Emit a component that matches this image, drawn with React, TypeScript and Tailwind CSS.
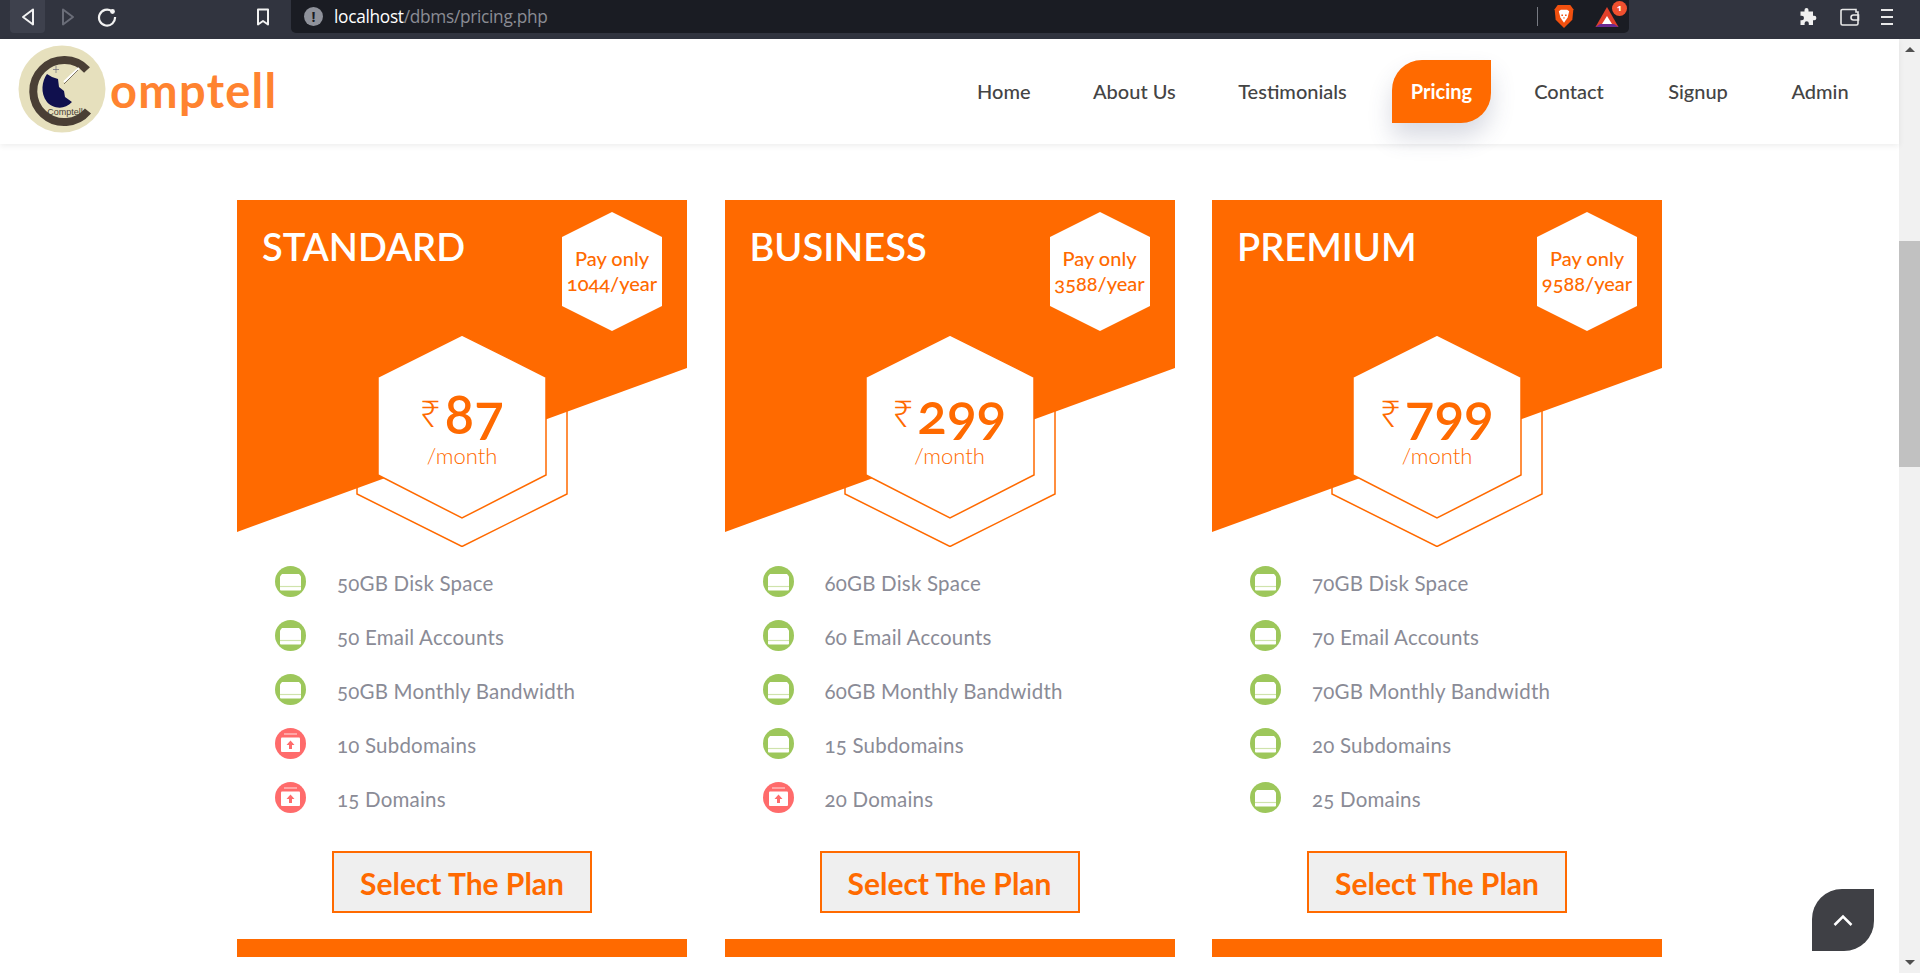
const nav = [
  { label: "Home", cls: "w-[53px] mr-[63px]" },
  { label: "About Us", cls: "w-[81px] mr-[63px]" },
  { label: "Testimonials", cls: "w-[111px] mr-[44px]" },
  { label: "Pricing", cls: "w-[99px] h-[63px] mr-[43px] flex items-center justify-center bg-[#ff6a00] text-white font-bold rounded-tl-[30px] rounded-br-[30px] shadow-[0_14px_24px_rgba(60,70,110,0.2)]" },
  { label: "Contact", cls: "w-[70px] mr-[63px]" },
  { label: "Signup", cls: "w-[62px] mr-[62px]" },
  { label: "Admin", cls: "w-[58px]" },
];

const plans = [
  {
    name: "STANDARD", year: "1044/year", price: "87",
    features: [["50GB Disk Space", 1], ["50 Email Accounts", 1], ["50GB Monthly Bandwidth", 1], ["10 Subdomains", 0], ["15 Domains", 0]],
  },
  {
    name: "BUSINESS", year: "3588/year", price: "299",
    features: [["60GB Disk Space", 1], ["60 Email Accounts", 1], ["60GB Monthly Bandwidth", 1], ["15 Subdomains", 1], ["20 Domains", 0]],
  },
  {
    name: "PREMIUM", year: "9588/year", price: "799",
    features: [["70GB Disk Space", 1], ["70 Email Accounts", 1], ["70GB Monthly Bandwidth", 1], ["20 Subdomains", 1], ["25 Domains", 1]],
  },
] as { name: string; year: string; price: string; features: [string, number][] }[];

function BrowserBar() {
  return (
    <div className="h-[39px] shrink-0 bg-[#31343f] flex items-start font-['Open_Sans',sans-serif]">
      <div className="w-[35px] h-[33px] ml-[10px] rounded-b-[4px] bg-[#3e414d] flex items-center justify-center">
        <svg width="16" height="20" viewBox="0 0 16 20" fill="none" stroke="#f2f2f2" strokeWidth="2" strokeLinejoin="round"><path d="M13 2.500 3 10l10 7.500z" /></svg>
      </div>
      <div className="w-[40px] h-[33px] flex items-center justify-center ml-[3px]">
        <svg width="16" height="20" viewBox="0 0 16 20" fill="none" stroke="#6a6d78" strokeWidth="2" strokeLinejoin="round"><path d="M3 2.500 13 10 3 17.500z" /></svg>
      </div>
      <div className="w-[38px] h-[33px] flex items-center justify-center">
        <svg width="20" height="20" viewBox="0 0 20 20" fill="none" stroke="#f2f2f2" strokeWidth="2.200"><path d="M14.800 4.200A8 8 0 1 0 18 10" /><circle cx="15.500" cy="4.500" r="2.400" fill="#f2f2f2" stroke="none" /></svg>
      </div>
      <div className="w-[37px] h-[33px] ml-[118px] flex items-center justify-center">
        <svg width="14" height="18" viewBox="0 0 14 18" fill="none" stroke="#f2f2f2" strokeWidth="2" strokeLinejoin="round"><path d="M2 1.500h10v15l-5-3.500-5 3.500z" /></svg>
      </div>
      <div className="ml-[10px] w-[1338px] h-[33px] bg-[#1a1c23] rounded-b-[5px] flex items-center">
        <div className="ml-[13px] w-[19px] h-[19px] rounded-full bg-[#8f929b] flex items-center justify-center text-[#1a1c23] text-[14px] font-bold leading-none">!</div>
        <div className="ml-[11px] text-[17.300px] tracking-[-0.3px] leading-none text-[#8a8c94]"><span className="text-white">localhost</span>/dbms/pricing.php</div>
        <div className="ml-auto w-px h-[19px] bg-[#777a82]" />
        <svg className="ml-[15px]" width="22" height="25" viewBox="0 0 20 24">
          <path d="M4 1h12l3 4-1 10-8 8-8-8L1 5z" fill="#f1500f" />
          <path d="M5 7l2-1.500h6L15 7l-1.500 6L10 18l-3.500-5z" fill="#fff" />
          <path d="M7.500 10h1.500v1.500H7.500zM11 10h1.500v1.500H11zM9 13h2l-1 1.500z" fill="#f1500f" />
        </svg>
        <div className="relative ml-[20px] w-[24px] h-[22px] mr-[10px]">
          <svg width="24" height="22" viewBox="0 0 24 22">
            <path d="M12 1 23.500 21H.5z" fill="#e2402b" />
            <path d="M.5 21 5 18h14l4.500 3z" fill="#6b2a93" />
            <path d="M12 10l5 8H7z" fill="#fff" />
          </svg>
          <div className="absolute -top-[5px] -right-[8px] w-[15px] h-[15px] rounded-full bg-[#f0502f] text-white text-[9px] font-bold flex items-center justify-center">1</div>
        </div>
      </div>
      <div className="ml-[167px] w-[24px] h-[33px] flex items-center justify-center">
        <svg width="19" height="19" viewBox="0 0 19 19" fill="#f0f0f0"><path d="M7.500 1a2 2 0 0 1 2 2v1.500H14v4.300h1.200a2.200 2.200 0 0 1 0 4.400H14V18H9.800v-1.700a2.100 2.100 0 0 0-4.200 0V18H1.500v-4.800h1.300a2.200 2.200 0 0 0 0-4.400H1.500V4.500h4V3a2 2 0 0 1 2-2z" /></svg>
      </div>
      <div className="ml-[18px] w-[24px] h-[33px] flex items-center justify-center">
        <svg width="20" height="18" viewBox="0 0 20 18" fill="none" stroke="#e8e8e8" strokeWidth="1.600"><path d="M16 4V1.500H2.500A1.500 1.500 0 0 0 1 3v12.500A1.500 1.500 0 0 0 2.500 17h14a1.500 1.500 0 0 0 1.500-1.500V4z" /><path d="M18.500 7h-5a2.500 2.500 0 0 0 0 5h5z" /></svg>
      </div>
      <div className="ml-[19px] w-[12px] h-[33px] flex flex-col justify-center gap-[5px]">
        <div className="h-[2px] bg-[#e8e8e8]" />
        <div className="h-[2px] bg-[#e8e8e8]" />
        <div className="h-[2px] bg-[#e8e8e8]" />
      </div>
    </div>
  );
}

function Logo() {
  return (
    <svg width="88" height="88" viewBox="0 0 88 88">
      <circle cx="44" cy="44" r="43.500" fill="#e6e0bd" />
      <path d="M69 25A31 31 0 1 0 70 66" fill="none" stroke="#4a3f35" strokeWidth="8" />
      <path d="M29 29C24 36 22 48 29 57 34 63 46 66 54 57L47 52 46 46 41 42 40 34 34 32z" fill="#10104e" />
      <path d="M46 37 61 23" stroke="#ffffff" strokeWidth="2" fill="none" />
      <path d="M46 39 60 25" stroke="#4a3f35" strokeWidth="0.700" fill="none" />
      <path d="M38 21v7M35 24.500h6" stroke="#6c6a7c" strokeWidth="0.700" />
      <text x="47" y="70" textAnchor="middle" fontSize="9" fill="#4a3f35" fontFamily="'Liberation Sans',sans-serif">Comptell</text>
    </svg>
  );
}

function Navbar() {
  return (
    <div className="relative z-10 h-[105px] shrink-0 bg-white shadow-[0_2px_6px_rgba(0,0,0,0.07)] flex items-center">
      <div className="ml-[18px] mb-[5px]"><Logo /></div>
      <div className="ml-[4px] mb-[3px] text-[47px] leading-none font-bold text-[#ff8330] font-['Lato',sans-serif] tracking-[1.300px]">omptell</div>
      <nav className="ml-auto mr-[50px] flex items-center text-[20px] font-medium text-[#444444] whitespace-nowrap">
        {nav.map((n) => (
          <div key={n.label} className={n.cls + " text-center pb-[2px]"}>{n.label}</div>
        ))}
      </nav>
    </div>
  );
}

function FeatureIcon({ ok }: { ok: number }) {
  return ok ? (
    <svg width="31" height="31" viewBox="0 0 31 31">
      <circle cx="15.500" cy="15.500" r="15.500" fill="#9dc75b" />
      <path d="M7 8h17l2 2.500v13a1 1 0 0 1-1 1H6a1 1 0 0 1-1-1v-13z" fill="#fff" />
      <path d="M5 20.500h21" stroke="#cfe3ac" strokeWidth="1.200" />
    </svg>
  ) : (
    <svg width="31" height="31" viewBox="0 0 31 31">
      <circle cx="15.500" cy="15.500" r="15.500" fill="#ff6b6b" />
      <path d="M9 6h13" stroke="#ffe2e2" strokeWidth="1" />
      <path d="M7 9.500h17a1 1 0 0 1 1 1V23a1 1 0 0 1-1 1H7a1 1 0 0 1-1-1V10.500a1 1 0 0 1 1-1z" fill="#fff" />
      <path d="M15.500 12.500 19.500 17H17v4h-3v-4h-2.500z" fill="#ff6b6b" />
    </svg>
  );
}

function Card({ plan }: { plan: (typeof plans)[number] }) {
  return (
    <div className="w-[450px]">
      <div className="relative h-[347px]">
        <svg className="absolute inset-0" width="450" height="347" viewBox="0 0 450 347">
          <path d="M120 100V294L225 346.500 330 294V100" fill="none" stroke="#ff6a00" strokeWidth="1.500" />
          <path d="M0 0H450V168L0 332z" fill="#ff6a00" />
          <path d="M325 37 375 12 425 37V106L375 131 325 106z" fill="#fff" />
          <path d="M141 177 225 135 309 177V275L225 318 141 275z" fill="#fff" stroke="#ff6a00" strokeWidth="1.500" />
        </svg>
        <div className="absolute left-[25px] top-[23px] text-[38px] leading-[46px] font-semibold text-white">{plan.name}</div>
        <div className="absolute left-[325px] top-[46px] w-[100px] text-center text-[20px] leading-[25px] font-medium text-[#ff6a00]">
          <div>Pay only</div>
          <div>{plan.year}</div>
        </div>
        <div className="absolute left-[141px] top-[183px] w-[168px] flex flex-col items-center text-[#ff6a00]">
          <div className="flex items-start h-[60px]">
            <span className="text-[36px] leading-[40px] mt-[11px] mr-[4px] font-light font-['Noto_Sans',sans-serif]">₹</span>
            <span className="text-[55px] leading-[60px] font-semibold">{plan.price}</span>
          </div>
          <div className="text-[22px] leading-[26px] font-light">/month</div>
        </div>
      </div>
      <ul className="mt-[7px] pl-[38px]">
        {plan.features.map(([text, ok]) => (
          <li key={text} className="h-[54px] flex items-center">
            <FeatureIcon ok={ok} />
            <span className="ml-[31px] mt-[4px] text-[20.500px] tracking-[0.2px] font-normal text-[#8a8b96]">{text}</span>
          </li>
        ))}
      </ul>
      <button className="block mx-auto mt-[27px] w-[260px] h-[62px] border-2 border-[#ff6a00] bg-[#efefef] text-[30px] leading-none pt-[1px] font-bold text-[#ff6a00]">Select The Plan</button>
      <div className="mt-[26px] h-[18px] bg-[#ff6a00]" />
    </div>
  );
}

function Scrollbar() {
  return (
    <div className="w-[21px] shrink-0 bg-[#f1f1f1] flex flex-col items-center">
      <div className="h-[21px] w-full flex items-center justify-center">
        <div className="w-0 h-0 border-x-[5px] border-x-transparent border-b-[5px] border-b-[#505050]" />
      </div>
      <div className="mt-[181px] w-full h-[226px] bg-[#c1c1c1]" />
      <div className="mt-auto h-[21px] w-full flex items-center justify-center">
        <div className="w-0 h-0 border-x-[5px] border-x-transparent border-t-[5px] border-t-[#505050]" />
      </div>
    </div>
  );
}

export default function App() {
  return (
    <div className="relative h-[973px] w-[1920px] overflow-hidden flex flex-col bg-white font-['Lato',sans-serif] [font-variant-numeric:oldstyle-nums]">
      <BrowserBar />
      <div className="flex flex-1 min-h-0">
        <div className="flex-1 min-w-0 flex flex-col">
          <Navbar />
          <div className="pt-[56px] pl-[237px] flex gap-[37.500px]">
            {plans.map((p) => (
              <Card key={p.name} plan={p} />
            ))}
          </div>
        </div>
        <Scrollbar />
      </div>
      <div className="absolute left-[1812px] top-[889px] w-[62px] h-[62px] bg-[#3f4045] rounded-tl-[30px] rounded-br-[30px] flex items-center justify-center">
        <svg width="20" height="12" viewBox="0 0 20 12" fill="none" stroke="#fff" strokeWidth="2.500"><path d="M1.500 11 10 2.500l8.500 8.500" /></svg>
      </div>
    </div>
  );
}
